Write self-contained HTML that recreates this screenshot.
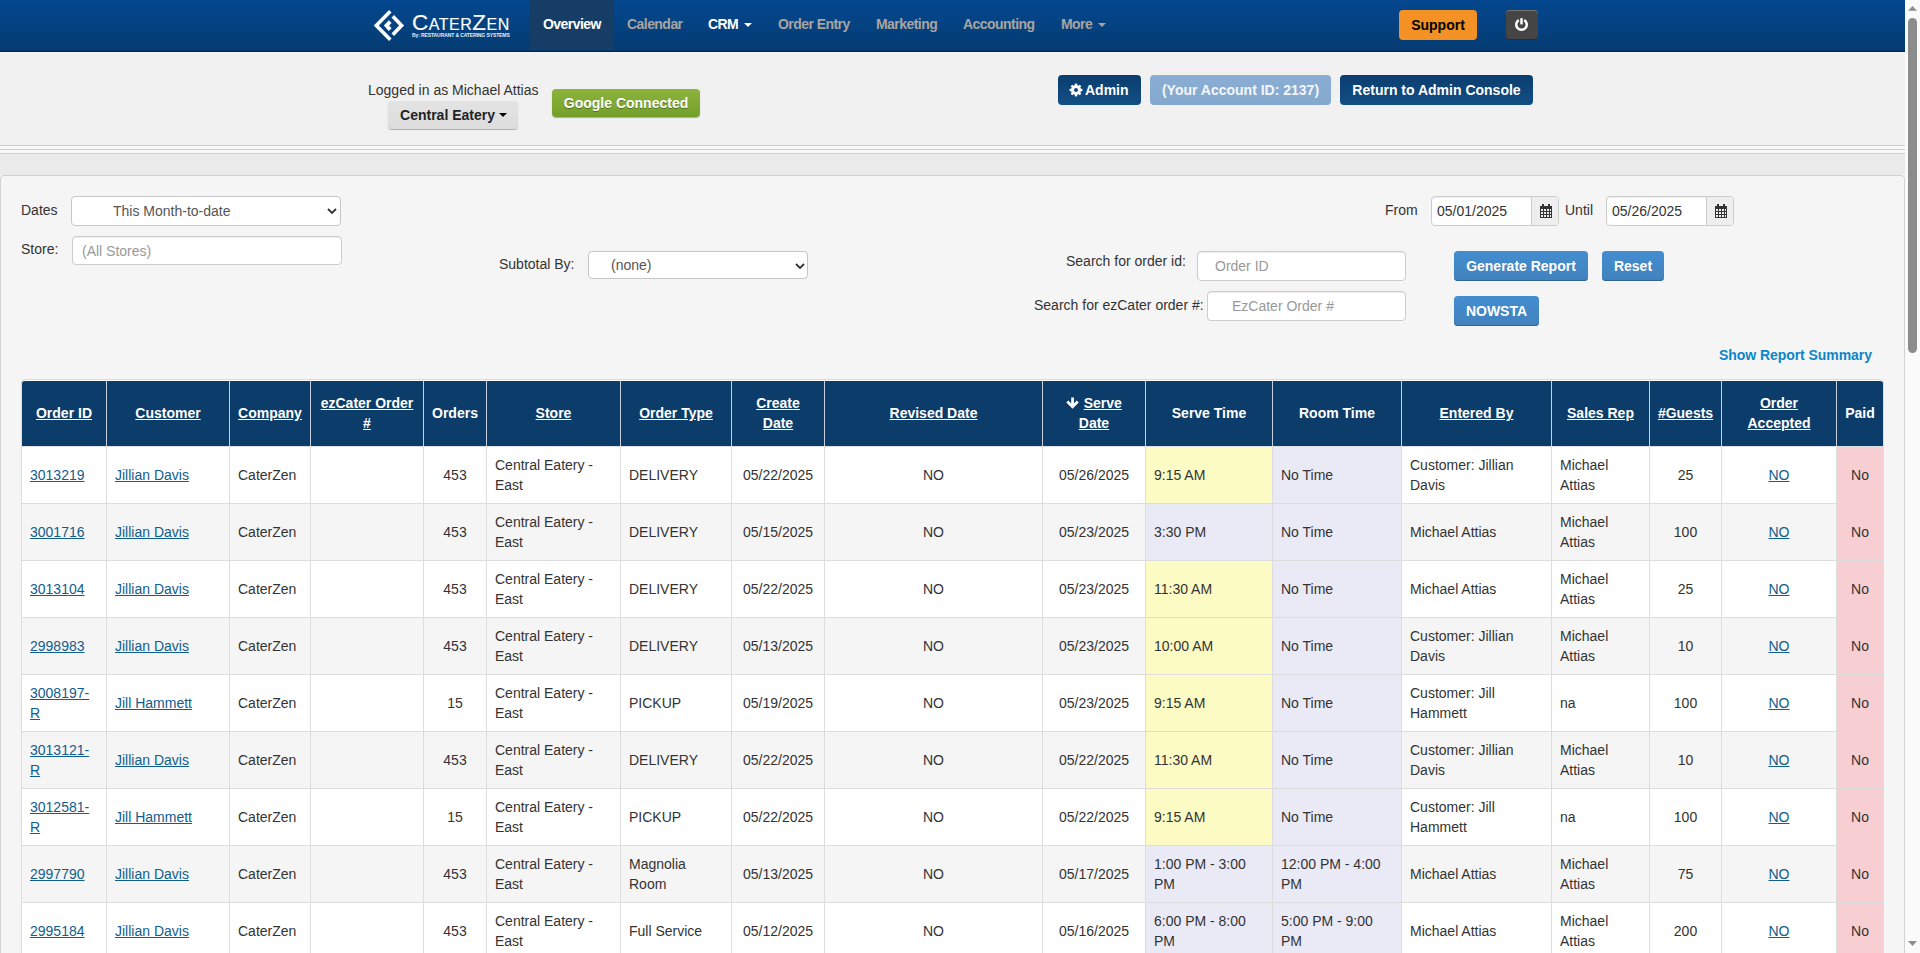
<!DOCTYPE html>
<html><head><meta charset="utf-8"><title>CaterZen</title>
<style>
*{box-sizing:border-box}
html,body{margin:0;padding:0}
body{width:1920px;height:953px;overflow:hidden;position:relative;font-family:"Liberation Sans",sans-serif;font-size:14px;line-height:20px;color:#333;background:#f5f5f5}
.abs{position:absolute}
/* navbar */
#nav{position:absolute;left:0;top:0;width:1905px;height:52px;background:linear-gradient(#04478f 0%,#04417f 55%,#053b72 100%);border-bottom:1px solid #181c22}
#nav .item{position:absolute;top:0;height:50px;font-size:14px;font-weight:bold;color:#a8a5a0;line-height:20px;padding-top:14px;letter-spacing:-0.55px}
#nav .item.w{color:#fff}
#nav .caret{margin-top:0;margin-left:6px}
#nav .active{position:absolute;left:530px;top:0;width:84px;height:50px;background:#163d66}
.caret{display:inline-block;width:0;height:0;border-left:4px solid transparent;border-right:4px solid transparent;border-top:4px solid currentColor;vertical-align:middle;margin-left:6px;margin-top:-2px}
#support{left:1399px;top:10px;width:78px;height:30px;background:#f39124;border-radius:4px;color:#000;font-weight:bold;text-align:center;line-height:30px}
#power{left:1506px;top:10px;width:32px;height:30px;background:#454545;border-radius:4px;box-shadow:inset 0 1px 0 #77736e,inset 0 -1px 0 #2e2c2a}
/* header band */
#band{left:0;top:52px;width:1905px;height:93px;background:#f1f1f1}
.hl{left:0;width:1905px;height:1px;background:#cfcfcf}
.btn{position:absolute;border-radius:4px;font-weight:bold;text-align:center;white-space:nowrap}
#well{left:0;top:175px;width:1905px;height:800px;border:1px solid #d2d2d2;border-radius:4px;background:#f5f5f5}
.inp{position:absolute;background:#fff;border:1px solid #ccc;border-radius:4px;box-shadow:inset 0 1px 1px rgba(0,0,0,.075)}
.ph{color:#999}
.lbl{position:absolute;white-space:nowrap}
/* table */
#tbl{position:absolute;left:21px;top:379px;border-collapse:separate;border-spacing:0;table-layout:fixed;width:1863px;border:1px solid #ddd;border-bottom:0;border-radius:4px 4px 0 0}
#tbl th{background:#0c3c69;color:#fff;font-weight:bold;height:66px;border-top:1px solid #fff;border-left:1px solid #c8d2dc;text-align:center;vertical-align:middle;padding:0 4px 1px}
#tbl th:first-child,#tbl td:first-child{border-left:0}
#tbl th:first-child{border-top-left-radius:3px}#tbl th:last-child{border-top-right-radius:3px}
#tbl th a{color:#fff;text-decoration:underline}
#tbl td{border-top:1px solid #ddd;border-left:1px solid #ddd;padding:8px;height:57px;vertical-align:middle;white-space:nowrap;background:#fff}
#tbl tr.g td{background:#f5f5f5}
#tbl td.c{text-align:center}
#tbl td.y{background:#fbfbc3!important}
#tbl td.l{background:#eae9f6!important}
#tbl td.p{background:#f7ced1!important;text-align:center}
#tbl tbody tr:first-child td{border-top-color:#dde1e3}
a{color:#115d8d;text-decoration:underline}
/* scrollbar */
#sb{left:1905px;top:0;width:15px;height:953px;background:#fafafa}
</style></head>
<body>
<div id="nav">
  <div class="active"></div>
  <svg class="abs" style="left:372px;top:9px" width="34" height="34" viewBox="0 0 34 34">
    <polyline points="18.3,2.25 4.3,16.5 18.3,30.8" fill="none" stroke="#fff" stroke-width="3.6"/>
    <polyline points="20.8,7.3 29.6,16.5 20.8,25.7" fill="none" stroke="#fff" stroke-width="3.6"/>
    <polyline points="18.2,12.6 14.5,16.5 18.2,20.6" fill="none" stroke="#fff" stroke-width="3.9"/>
  </svg>
  <div class="abs" style="left:412px;top:10.5px;color:#fff;white-space:nowrap;line-height:24px;letter-spacing:0.5px;-webkit-text-stroke:0.15px #fff"><span style="font-size:22.5px">C</span><span style="font-size:16px">ATER</span><span style="font-size:22.5px">Z</span><span style="font-size:16px">EN</span></div>
  <div class="abs" style="left:412px;top:31px;color:#e8eef5;white-space:nowrap;font-size:5px;line-height:8px;font-weight:bold;letter-spacing:-0.1px">By: RESTAURANT &amp; CATERING SYSTEMS</div>
  <div class="item w" style="left:543px">Overview</div>
  <div class="item" style="left:627px">Calendar</div>
  <div class="item w" style="left:708px">CRM<span class="caret"></span></div>
  <div class="item" style="left:778px">Order Entry</div>
  <div class="item" style="left:876px">Marketing</div>
  <div class="item" style="left:963px">Accounting</div>
  <div class="item" style="left:1061px">More<span class="caret"></span></div>
  <div id="support" class="abs">Support</div>
  <div id="power" class="abs">
    <svg class="abs" style="left:0;top:0" width="32" height="30" viewBox="0 0 32 30"><path d="M12.72 10.15 A5.25 5.25 0 1 0 18.28 10.15" fill="none" stroke="#fff" stroke-width="2.5"/><line x1="15.5" y1="8.2" x2="15.5" y2="14.4" stroke="#fff" stroke-width="2.5"/></svg>
  </div>
</div>
<div id="band" class="abs"></div><div class="abs" style="left:0;top:52px;width:1905px;height:1px;background:#f7f7f7"></div>
<div class="abs hl" style="top:145px"></div>
<div class="abs" style="left:0;top:146px;width:1905px;height:3px;background:#f9f9f9"></div>
<div class="abs hl" style="top:149px"></div>
<div class="abs" style="left:0;top:150px;width:1905px;height:3px;background:#f9f9f9"></div>
<div class="abs hl" style="top:153px"></div>
<div class="abs" style="left:0;top:154px;width:1905px;height:21px;background:#ebebeb"></div>
<div id="well" class="abs"></div>
<!-- top info -->
<div class="lbl" style="left:368px;top:80px">Logged in as Michael Attias</div>
<div class="btn" style="left:388px;top:101px;width:130px;height:28px;background:linear-gradient(#e3e3e3,#dddddd);box-shadow:0 1px 1px rgba(0,0,0,.28);color:#222;line-height:28px;padding-left:1px">Central Eatery<span class="caret" style="margin-left:4px;color:#000"></span></div>
<div class="btn" style="left:552px;top:89px;width:148px;height:28px;background:linear-gradient(#8db33c,#72a02a);box-shadow:0 1px 1px rgba(0,0,0,.3);color:#fff;line-height:29px;text-shadow:0 1px 0 rgba(0,0,0,.35)">Google Connected</div>
<div class="btn" style="left:1058px;top:75px;width:83px;height:30px;background:linear-gradient(#0b3d6f,#124f85);color:#fff;line-height:31px">
  <svg style="position:absolute;left:11px;top:8px" width="14" height="14" viewBox="0 0 14 14"><g fill="#fff"><circle cx="7" cy="7" r="5.1"/><rect x="5.8" y="0.6" width="2.4" height="12.8"/><rect x="5.8" y="0.6" width="2.4" height="12.8" transform="rotate(45 7 7)"/><rect x="5.8" y="0.6" width="2.4" height="12.8" transform="rotate(90 7 7)"/><rect x="5.8" y="0.6" width="2.4" height="12.8" transform="rotate(135 7 7)"/></g><circle cx="7" cy="7" r="2" fill="#0f467a"/></svg>
  <span style="position:absolute;left:27px;top:0">Admin</span></div>
<div class="btn" style="left:1150px;top:75px;width:181px;height:30px;background:linear-gradient(#8aaed3,#85a9ce);color:#f3f6fa;line-height:31px">(Your Account ID: 2137)</div>
<div class="btn" style="left:1340px;top:75px;width:193px;height:30px;background:linear-gradient(#0b3d6f,#124f85);color:#fff;line-height:31px">Return to Admin Console</div>

<!-- form -->
<div class="lbl" style="left:21px;top:200px">Dates</div>
<div class="inp" style="left:71px;top:196px;width:270px;height:30px;border-color:#c6c6c6;box-shadow:none"><span class="abs" style="left:41px;top:4px;color:#555">This Month-to-date</span>
  <svg class="abs" style="left:253.5px;top:8.5px" width="12" height="10" viewBox="0 0 12 10"><polyline points="2,3 6,7 10,3" fill="none" stroke="#333" stroke-width="1.8"/></svg></div>
<div class="lbl" style="left:21px;top:239px">Store:</div>
<div class="inp" style="left:72px;top:236px;width:270px;height:29px"><span class="abs ph" style="left:9px;top:4px">(All Stores)</span></div>
<div class="lbl" style="left:499px;top:254px">Subtotal By:</div>
<div class="inp" style="left:588px;top:251px;width:220px;height:28px;border-color:#c6c6c6;box-shadow:none"><span class="abs" style="left:22px;top:3px;color:#555">(none)</span>
  <svg class="abs" style="left:204.5px;top:8.5px" width="12" height="10" viewBox="0 0 12 10"><polyline points="2,3 6,7 10,3" fill="none" stroke="#333" stroke-width="1.8"/></svg></div>

<div class="lbl" style="left:1385px;top:200px">From</div>
<div class="inp" style="left:1431px;top:196px;width:128px;height:30px"><span class="abs" style="left:5px;top:4px">05/01/2025</span>
  <div class="abs" style="left:99px;top:0;width:27px;height:28px;background:#eee;border-left:1px solid #ccc;border-radius:0 3px 3px 0"></div>
  <svg class="abs" style="left:106.5px;top:7px" width="14" height="15" viewBox="0 0 14 15"><g fill="#333"><rect x="1" y="2" width="12" height="12"/></g><g fill="#eee"><rect x="2" y="5" width="2" height="2"/><rect x="5" y="5" width="2" height="2"/><rect x="8" y="5" width="2" height="2"/><rect x="11" y="5" width="1" height="2"/><rect x="2" y="8" width="2" height="2"/><rect x="5" y="8" width="2" height="2"/><rect x="8" y="8" width="2" height="2"/><rect x="11" y="8" width="1" height="2"/><rect x="2" y="11" width="2" height="2"/><rect x="5" y="11" width="2" height="2"/><rect x="8" y="11" width="2" height="2"/><rect x="11" y="11" width="1" height="2"/></g><g fill="#333"><rect x="3" y="0" width="2" height="3"/><rect x="9" y="0" width="2" height="3"/></g></svg></div>
<div class="lbl" style="left:1565px;top:200px">Until</div>
<div class="inp" style="left:1606px;top:196px;width:128px;height:30px"><span class="abs" style="left:5px;top:4px">05/26/2025</span>
  <div class="abs" style="left:99px;top:0;width:27px;height:28px;background:#eee;border-left:1px solid #ccc;border-radius:0 3px 3px 0"></div>
  <svg class="abs" style="left:106.5px;top:7px" width="14" height="15" viewBox="0 0 14 15"><g fill="#333"><rect x="1" y="2" width="12" height="12"/></g><g fill="#eee"><rect x="2" y="5" width="2" height="2"/><rect x="5" y="5" width="2" height="2"/><rect x="8" y="5" width="2" height="2"/><rect x="11" y="5" width="1" height="2"/><rect x="2" y="8" width="2" height="2"/><rect x="5" y="8" width="2" height="2"/><rect x="8" y="8" width="2" height="2"/><rect x="11" y="8" width="1" height="2"/><rect x="2" y="11" width="2" height="2"/><rect x="5" y="11" width="2" height="2"/><rect x="8" y="11" width="2" height="2"/><rect x="11" y="11" width="1" height="2"/></g><g fill="#333"><rect x="3" y="0" width="2" height="3"/><rect x="9" y="0" width="2" height="3"/></g></svg></div>

<div class="lbl" style="left:1066px;top:251px">Search for order id:</div>
<div class="inp" style="left:1197px;top:251px;width:209px;height:30px"><span class="abs ph" style="left:17px;top:4px">Order ID</span></div>
<div class="lbl" style="left:1034px;top:295px">Search for ezCater order #:</div>
<div class="inp" style="left:1207px;top:291px;width:199px;height:30px"><span class="abs ph" style="left:24px;top:4px">EzCater Order #</span></div>

<div class="btn" style="left:1454px;top:251px;width:134px;height:30px;background:linear-gradient(#428dd1,#4282bc);box-shadow:inset 0 -1px 0 #2f659a;color:#fff;line-height:30px">Generate Report</div>
<div class="btn" style="left:1602px;top:251px;width:62px;height:30px;background:linear-gradient(#428dd1,#4282bc);box-shadow:inset 0 -1px 0 #2f659a;color:#fff;line-height:30px">Reset</div>
<div class="btn" style="left:1454px;top:296px;width:85px;height:30px;background:linear-gradient(#428dd1,#4282bc);box-shadow:inset 0 -1px 0 #2f659a;color:#fff;line-height:30px">NOWSTA</div>
<div class="lbl" style="left:1719px;top:345px;font-weight:bold;color:#0b86c9;letter-spacing:-0.06px">Show Report Summary</div>

<!--TABLE-->
<table id="tbl"><colgroup>
<col style="width:84px">
<col style="width:123px">
<col style="width:81px">
<col style="width:113px">
<col style="width:63px">
<col style="width:134px">
<col style="width:111px">
<col style="width:93px">
<col style="width:218px">
<col style="width:103px">
<col style="width:127px">
<col style="width:129px">
<col style="width:150px">
<col style="width:98px">
<col style="width:72px">
<col style="width:115px">
<col style="width:47px">
</colgroup><thead><tr>
<th><a>Order ID</a></th>
<th><a>Customer</a></th>
<th><a>Company</a></th>
<th><a>ezCater Order<br>#</a></th>
<th>Orders</th>
<th><a>Store</a></th>
<th><a>Order Type</a></th>
<th><a>Create<br>Date</a></th>
<th><a>Revised Date</a></th>
<th><svg width="13" height="13" viewBox="0 0 13 13" style="vertical-align:-1px;margin-right:4.5px"><rect x="5.2" y="1.5" width="2.7" height="8" fill="#fff"/><polyline points="1.3,5.6 6.55,10.85 11.8,5.6" fill="none" stroke="#fff" stroke-width="2.8"/></svg><a>Serve</a><br><a>Date</a></th>
<th>Serve Time</th>
<th>Room Time</th>
<th><a>Entered By</a></th>
<th><a>Sales Rep</a></th>
<th><a>#Guests</a></th>
<th><a>Order<br>Accepted</a></th>
<th>Paid</th>
</tr></thead><tbody>
<tr><td><a>3013219</a></td><td><a>Jillian Davis</a></td><td>CaterZen</td><td></td><td class="c">453</td><td>Central Eatery -<br>East</td><td>DELIVERY</td><td class="c">05/22/2025</td><td class="c">NO</td><td class="c">05/26/2025</td><td class="y">9:15 AM</td><td class="l">No Time</td><td>Customer: Jillian<br>Davis</td><td>Michael<br>Attias</td><td class="c">25</td><td class="c"><a>NO</a></td><td class="p">No</td></tr>
<tr class="g"><td><a>3001716</a></td><td><a>Jillian Davis</a></td><td>CaterZen</td><td></td><td class="c">453</td><td>Central Eatery -<br>East</td><td>DELIVERY</td><td class="c">05/15/2025</td><td class="c">NO</td><td class="c">05/23/2025</td><td class="l">3:30 PM</td><td class="l">No Time</td><td>Michael Attias</td><td>Michael<br>Attias</td><td class="c">100</td><td class="c"><a>NO</a></td><td class="p">No</td></tr>
<tr><td><a>3013104</a></td><td><a>Jillian Davis</a></td><td>CaterZen</td><td></td><td class="c">453</td><td>Central Eatery -<br>East</td><td>DELIVERY</td><td class="c">05/22/2025</td><td class="c">NO</td><td class="c">05/23/2025</td><td class="y">11:30 AM</td><td class="l">No Time</td><td>Michael Attias</td><td>Michael<br>Attias</td><td class="c">25</td><td class="c"><a>NO</a></td><td class="p">No</td></tr>
<tr class="g"><td><a>2998983</a></td><td><a>Jillian Davis</a></td><td>CaterZen</td><td></td><td class="c">453</td><td>Central Eatery -<br>East</td><td>DELIVERY</td><td class="c">05/13/2025</td><td class="c">NO</td><td class="c">05/23/2025</td><td class="y">10:00 AM</td><td class="l">No Time</td><td>Customer: Jillian<br>Davis</td><td>Michael<br>Attias</td><td class="c">10</td><td class="c"><a>NO</a></td><td class="p">No</td></tr>
<tr><td><a>3008197-<br>R</a></td><td><a>Jill Hammett</a></td><td>CaterZen</td><td></td><td class="c">15</td><td>Central Eatery -<br>East</td><td>PICKUP</td><td class="c">05/19/2025</td><td class="c">NO</td><td class="c">05/23/2025</td><td class="y">9:15 AM</td><td class="l">No Time</td><td>Customer: Jill<br>Hammett</td><td>na</td><td class="c">100</td><td class="c"><a>NO</a></td><td class="p">No</td></tr>
<tr class="g"><td><a>3013121-<br>R</a></td><td><a>Jillian Davis</a></td><td>CaterZen</td><td></td><td class="c">453</td><td>Central Eatery -<br>East</td><td>DELIVERY</td><td class="c">05/22/2025</td><td class="c">NO</td><td class="c">05/22/2025</td><td class="y">11:30 AM</td><td class="l">No Time</td><td>Customer: Jillian<br>Davis</td><td>Michael<br>Attias</td><td class="c">10</td><td class="c"><a>NO</a></td><td class="p">No</td></tr>
<tr><td><a>3012581-<br>R</a></td><td><a>Jill Hammett</a></td><td>CaterZen</td><td></td><td class="c">15</td><td>Central Eatery -<br>East</td><td>PICKUP</td><td class="c">05/22/2025</td><td class="c">NO</td><td class="c">05/22/2025</td><td class="y">9:15 AM</td><td class="l">No Time</td><td>Customer: Jill<br>Hammett</td><td>na</td><td class="c">100</td><td class="c"><a>NO</a></td><td class="p">No</td></tr>
<tr class="g"><td><a>2997790</a></td><td><a>Jillian Davis</a></td><td>CaterZen</td><td></td><td class="c">453</td><td>Central Eatery -<br>East</td><td>Magnolia<br>Room</td><td class="c">05/13/2025</td><td class="c">NO</td><td class="c">05/17/2025</td><td class="l">1:00 PM - 3:00<br>PM</td><td class="l">12:00 PM - 4:00<br>PM</td><td>Michael Attias</td><td>Michael<br>Attias</td><td class="c">75</td><td class="c"><a>NO</a></td><td class="p">No</td></tr>
<tr><td><a>2995184</a></td><td><a>Jillian Davis</a></td><td>CaterZen</td><td></td><td class="c">453</td><td>Central Eatery -<br>East</td><td>Full Service</td><td class="c">05/12/2025</td><td class="c">NO</td><td class="c">05/16/2025</td><td class="l">6:00 PM - 8:00<br>PM</td><td class="l">5:00 PM - 9:00<br>PM</td><td>Michael Attias</td><td>Michael<br>Attias</td><td class="c">200</td><td class="c"><a>NO</a></td><td class="p">No</td></tr>
</tbody></table>
<!--/TABLE-->
<div id="sb" class="abs"><svg class="abs" style="left:0;top:0" width="15" height="953" viewBox="0 0 15 953"><polygon points="3,10.8 12,10.8 7.5,6" fill="#8c8c8c"/><rect x="3" y="18" width="9" height="335" rx="4.5" fill="#8c8c8c"/><polygon points="3,941 12,941 7.5,946" fill="#8c8c8c"/></svg></div>
</body></html>
